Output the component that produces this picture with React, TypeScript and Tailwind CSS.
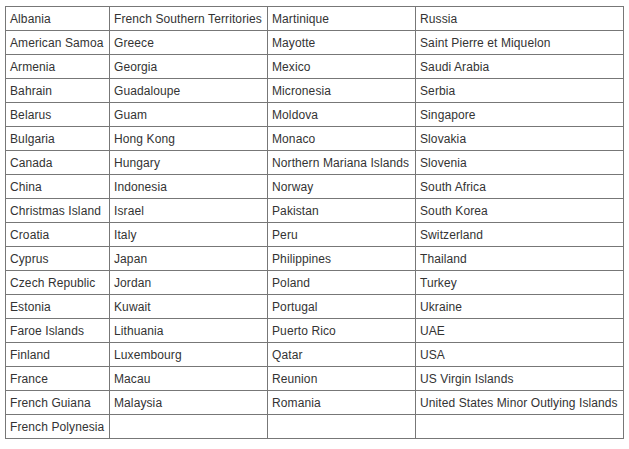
const rows: string[][] = [
  ['Albania', 'French Southern Territories', 'Martinique', 'Russia'],
  ['American Samoa', 'Greece', 'Mayotte', 'Saint Pierre et Miquelon'],
  ['Armenia', 'Georgia', 'Mexico', 'Saudi Arabia'],
  ['Bahrain', 'Guadaloupe', 'Micronesia', 'Serbia'],
  ['Belarus', 'Guam', 'Moldova', 'Singapore'],
  ['Bulgaria', 'Hong Kong', 'Monaco', 'Slovakia'],
  ['Canada', 'Hungary', 'Northern Mariana Islands', 'Slovenia'],
  ['China', 'Indonesia', 'Norway', 'South Africa'],
  ['Christmas Island', 'Israel', 'Pakistan', 'South Korea'],
  ['Croatia', 'Italy', 'Peru', 'Switzerland'],
  ['Cyprus', 'Japan', 'Philippines', 'Thailand'],
  ['Czech Republic', 'Jordan', 'Poland', 'Turkey'],
  ['Estonia', 'Kuwait', 'Portugal', 'Ukraine'],
  ['Faroe Islands', 'Lithuania', 'Puerto Rico', 'UAE'],
  ['Finland', 'Luxembourg', 'Qatar', 'USA'],
  ['France', 'Macau', 'Reunion', 'US Virgin Islands'],
  ['French Guiana', 'Malaysia', 'Romania', 'United States Minor Outlying Islands'],
  ['French Polynesia', '', '', ''],
]

export default function App() {
  return (
    <div className="w-[629px] h-[449px] bg-white pl-[5px] pt-[6px] font-['Liberation_Sans',Arial,sans-serif] text-[12px] tracking-[0.1px] text-[#333]">
      <table className="border-collapse table-fixed w-[618px]">
        <colgroup>
          <col className="w-[104px]" />
          <col className="w-[158px]" />
          <col className="w-[148px]" />
          <col className="w-[208px]" />
        </colgroup>
        <tbody>
          {rows.map((r, i) => (
            <tr key={i} className="h-[24px]">
              {r.map((c, j) => (
                <td key={j} className="border border-[#777] pl-[4px] pr-[3px] pt-[1px] pb-0 whitespace-nowrap leading-[22px]">
                  {c}
                </td>
              ))}
            </tr>
          ))}
        </tbody>
      </table>
    </div>
  )
}
